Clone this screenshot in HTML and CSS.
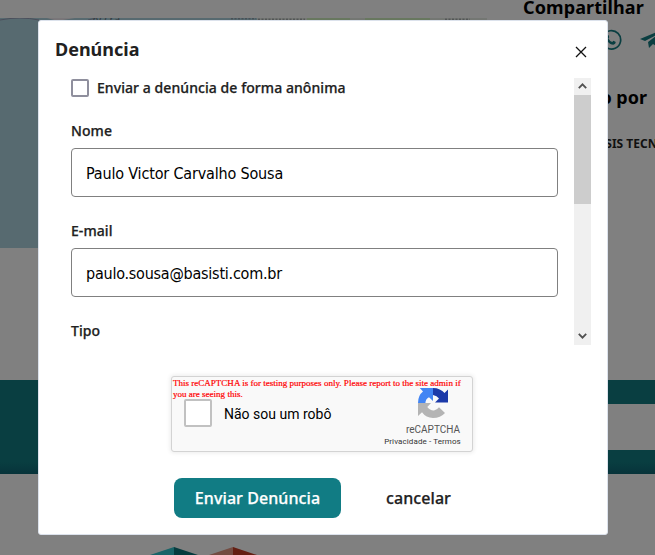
FILE: index.html
```
<!DOCTYPE html>
<html lang="pt-BR">
<head>
<meta charset="utf-8">
<title>Denúncia</title>
<link rel="stylesheet" href="styles.css">
</head>
<body>
<div class="page">
  <div class="content">
    <div class="map">
      <svg width="487" height="230" viewBox="0 0 487 230">
        <path d="M0 2Q20-2 39 2M88 2L96 0" fill="none" stroke="#4b4e5b"/>
        <path d="M47 0H75L63 2H54Z" fill="#797679"/>
        <text x="92" y="5" class="map-label">Accra</text>
        <path d="M257 0H487V2H257Z" fill="#747773"/>
        <path d="M307 0H350V2H307ZM365 0H430V2H365Z" fill="#68785f"/>
        <path d="M231 .8H256M258 1.2H305M445 1.2H470" stroke="#44464c" stroke-dasharray="2 1.5"/>
      </svg>
    </div>
    <aside class="aside">
      <h2 class="share-title">Compartilhar</h2>
      <div class="share">
        <svg width="22" height="22" viewBox="0 0 22 22"><path d="M2 20L3.4 15.3A9.2 9.2 0 1 1 6.8 18.8Z" fill="none" stroke="#0a3e41" stroke-width="1.7"/><path d="M7 6.2L8.3 6Q9.2 7 9.2 8.3L8.4 9.4Q9.7 12 12.2 13L13.5 11.8L15.8 13.1Q15.7 15.5 13.4 15.7C9 15.6 6 11 6 8Z" fill="#0a3e41"/></svg>
        <svg width="26" height="22" viewBox="0 0 26 22"><path d="M0 10L24 0L20 19L13 15L9 19L8 13L20 4L5 12Z" fill="#0a3e41"/></svg>
      </div>
      <h2 class="pub-title">Publicado por</h2>
      <p class="org">BASIS TECNOLOGIA</p>
    </aside>
  </div>
  <div class="band"><div class="band-field"></div></div>
  <div class="logos">
    <svg width="120" height="9" viewBox="0 0 120 9"><path d="M0 9L24 1V9Z" fill="#1a6468"/><path d="M24 1L48 9H24Z" fill="#063b3e"/><path d="M59 9L83 1V9Z" fill="#744c42"/><path d="M83 1L107 9H83Z" fill="#641e12"/></svg>
  </div>
</div>
<div class="overlay">
  <section class="modal" role="dialog">
    <header class="modal-head">
      <h1>Denúncia</h1>
      <svg class="close" width="12" height="12" viewBox="0 0 12 12"><path d="M1 1L11 11M11 1L1 11" stroke="#111" stroke-width="1.3"/></svg>
    </header>
    <div class="modal-body">
      <form class="fields">
        <div class="anon"><span class="box"></span><span>Enviar a denúncia de forma anônima</span></div>
        <div class="label">Nome</div>
        <div class="input"><span class="name">Paulo Victor Carvalho Sousa</span></div>
        <div class="label">E-mail</div>
        <div class="input"><span class="mail">paulo.sousa@basisti.com.br</span></div>
        <div class="label">Tipo</div>
      </form>
      <div class="scroll">
        <svg width="17" height="17" viewBox="0 0 17 17"><path d="M4.8 10.2L8.5 6.3L12.2 10.2" fill="none" stroke="#505050" stroke-width="1.8"/></svg>
        <div class="thumb"></div>
        <svg class="down" width="17" height="17" viewBox="0 0 17 17"><path d="M4.8 5.8L8.5 9.7L12.2 5.8" fill="none" stroke="#505050" stroke-width="1.8"/></svg>
      </div>
    </div>
    <div class="captcha">
      <div class="warning"><span>This reCAPTCHA is for testing purposes only. Please report to the site admin if</span><br><span>you are seeing this.</span></div>
      <div class="check"><span class="captcha-box"></span><span class="robot">Não sou um robô</span></div>
      <div class="brand">
        <svg width="32" height="32" viewBox="0 0 32 32">
          <path d="M16 1C21 1 25 3 27.5 6L31 2.5V15.5H18L22 11.5Q20 8.5 16 8Z" fill="#1c3aa9"/>
          <path d="M16 1V14L12 10.2Q8.5 12 8.4 16H1Q1 8.5 6 4.6L2.8 1Z" fill="#4285f4"/>
          <path d="M1 16H14L10.3 20Q13 23.6 17 23.4Q20 23 22 20.3L28 26Q23.5 31 16 31Q9 31 5 25.3L1 29Z" fill="#b4b4b4"/>
        </svg>
        <div class="brand-name">reCAPTCHA</div>
        <div class="terms">Privacidade - Termos</div>
      </div>
    </div>
    <footer class="actions"><button class="send">Enviar Denúncia</button><span class="cancel">cancelar</span></footer>
  </section>
</div>
</body>
</html>
```
FILE: styles.css
```
* { box-sizing: border-box; }
body { margin: 0; width: 655px; height: 555px; overflow: hidden; background: #808080; font-family: "Noto Sans", sans-serif; color: #212121; }
h1, h2, p { margin: 0; }
svg { display: block; }
.page { height: 555px; overflow: hidden; }
.content { display: flex; height: 380px; }
.map { flex: none; width: 487px; height: 230px; margin-top: 18px; background: #576a70; }
.map-label { font: 11px "Noto Sans", sans-serif; fill: #333a40; }
.aside { width: 168px; padding-left: 36px; color: #000; overflow: hidden; white-space: nowrap; }
.aside h2 { font-size: 18px; line-height: 24px; font-weight: 700; }
.share-title { margin-top: -5px; letter-spacing: .1px; }
.share { display: flex; gap: 18px; margin: 10px 0 0 77px; }
.share svg { flex: none; }
.aside .pub-title { margin-top: 34px; width: 124px; text-align: right; }
.org { margin: 26px 0 0 66px; font-size: 12px; line-height: 18px; font-weight: 700; color: #111; }
.band { height: 94px; padding-top: 24px; background: linear-gradient(#093e41 82px, #07333a); }
.band-field { height: 46px; margin-left: 120px; background: #808080; }
.logos { margin: 72px 0 0 150px; }
.overlay { position: absolute; inset: 0; padding: 20px 0 0 38px; }
.modal { width: 570px; height: 515px; background: #fff; border: 1px solid #dce2ec; border-radius: 3px; }
.modal-head { display: flex; justify-content: space-between; height: 57px; padding: 16px 20px 0 16px; }
.modal-head h1 { font-size: 18px; line-height: 24px; font-weight: 700; }
.close { margin-top: 9px; }
.modal-body { display: flex; justify-content: space-between; height: 267px; padding: 0 16px 0 32px; }
.fields { width: 487px; font-size: 14px; line-height: 20px; font-weight: 500; letter-spacing: .07px; -webkit-text-stroke: .25px #212121; }
.anon { display: flex; align-items: center; gap: 8px; height: 20px; }
.box { width: 18px; height: 18px; border: 2px solid #8f8f9d; border-radius: 2px; }
.label { height: 20px; margin-top: 24px; }
.anon + .label { margin-top: 23px; }
.label + .input { margin-top: 7px; }
.input { display: flex; align-items: center; height: 49px; padding: 2px 0 0 14px; border: 1px solid #808080; border-radius: 4px; color: #000; font: 16px/24px "DejaVu Sans Condensed", "DejaVu Sans", sans-serif; -webkit-text-stroke: 0; }
.name { letter-spacing: -.17px; }
.mail { letter-spacing: -.23px; }
.scroll { display: flex; flex-direction: column; width: 17px; background: #f0f0f0; }
.thumb { height: 109px; background: #cdcdcd; }
.down { margin-top: auto; }
.captcha { display: grid; grid-template-columns: 1fr 100px; width: 302px; height: 76px; margin: 31px 0 0 132px; border: 1px solid #d3d3d3; border-radius: 3px; background: #f9f9f9; box-shadow: 0 0 4px 1px rgba(0,0,0,.08); }
.warning { position: absolute; padding: 1px 0 0 1px; color: #f00; font: 9px/11px "Liberation Serif", serif; letter-spacing: .01px; -webkit-text-stroke: .2px #f00; white-space: nowrap; }
.check { display: flex; align-items: center; padding: 0 0 3px 12px; gap: 12px; }
.captcha-box { width: 28px; height: 28px; border: 2px solid #c1c1c1; border-radius: 2px; background: #fff; }
.robot { padding-top: 2px; font: 14px/18px Roboto, sans-serif; color: #000; }
.brand { display: flex; flex-direction: column; align-items: center; padding-top: 10px; color: #555; white-space: nowrap; }
.brand svg { margin-left: 22px; }
.brand-name { margin: 4px 0 0 22px; font: 10px/13px Roboto, sans-serif; }
.terms { margin: 1px 0 0 1px; font: 8px/10px Roboto, sans-serif; letter-spacing: .1px; color: #333; }
.actions { display: flex; align-items: center; margin: 26px 0 0 135px; font-size: 16px; line-height: 24px; font-weight: 500; letter-spacing: .08px; -webkit-text-stroke: .25px; }
.send { width: 167px; height: 40px; padding: 0; border: 0; border-radius: 8px; background: #117c84; color: #fff; font: inherit; letter-spacing: inherit; }
.cancel { margin-left: 45px; }
```
